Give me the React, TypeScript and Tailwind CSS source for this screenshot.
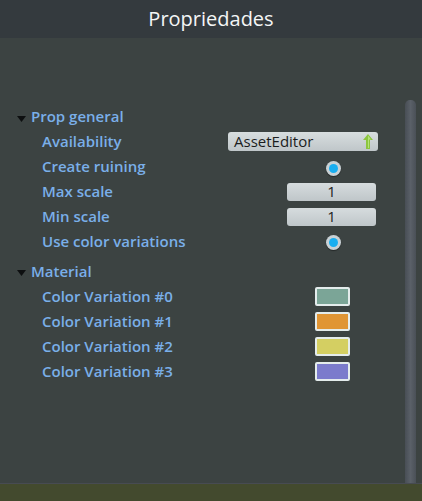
import React from 'react';

const label = 'text-[15px] font-semibold text-[#7aafe9] leading-none';

function Caret() {
  return (
    <svg width="9" height="6" viewBox="0 0 9 6" className="mt-[4px] shrink-0">
      <path d="M0 0 H9 L4.5 6 Z" fill="#0d0f10" />
    </svg>
  );
}

function Radio() {
  return (
    <div className="w-[15px] h-[15px] rounded-full bg-[#c9d1d5] flex items-center justify-center shadow-[0_1px_1px_rgba(0,0,0,0.4)]">
      <div className="w-[9px] h-[9px] rounded-full bg-[#19aef0]" />
    </div>
  );
}

function NumberBox({ value }: { value: string }) {
  return (
    <div className="w-[89px] h-[18px] rounded-[3px] bg-gradient-to-b from-[#d6dcde] to-[#bfc6c9] flex items-center justify-center text-[15px] text-[#1b1d1e] leading-none">
      {value}
    </div>
  );
}

function Swatch({ color }: { color: string }) {
  return (
    <div className="w-[35px] h-[19px] rounded-[2px] border-[2px] border-[#e4ecec]" style={{ background: color }} />
  );
}

function Row({ text, children }: { text: string; children?: React.ReactNode }) {
  return (
    <div className="h-[25px] flex items-center">
      <div className={`w-[228px] pl-[42px] ${label}`}>{text}</div>
      <div className="w-[150px] flex justify-end items-center">{children}</div>
    </div>
  );
}

function Group({ title, className = '' }: { title: string; className?: string }) {
  return (
    <div className={`flex items-center pl-[17px] gap-[5px] ${className}`}>
      <Caret />
      <span className={label}>{title}</span>
    </div>
  );
}

export default function App() {
  return (
    <div className="w-[422px] h-[501px] flex flex-col bg-[#3c4342]" style={{ fontFamily: '"Open Sans", "Noto Sans", sans-serif' }}>
      <div className="h-[38px] bg-[#343a3e] flex items-center justify-center text-[20px] text-[#f4f6f6] shrink-0">
        Propriedades
      </div>
      <div className="flex-1 flex border-b border-[#474b52]">
        <div className="flex-1 pt-[66px]">
          <Group title="Prop general" className="h-[25px]" />
          <Row text="Availability">
            <div className="w-[150px] h-[19px] rounded-[3px] bg-gradient-to-b from-[#d8dedf] to-[#bfc6c9] flex items-center pl-[6px] pr-[5px] text-[15px] text-[#1b1d1e] leading-none">
              <span className="flex-1">AssetEditor</span>
              <svg width="10" height="15" viewBox="0 0 10 15">
                <path d="M5 0 L10 6 H7 V15 H3 V6 H0 Z" fill="#8cc63f" />
                <path d="M5 1.5 L8 5.5 H6 V14 H5 Z" fill="#b5e27a" />
              </svg>
            </div>
          </Row>
          <Row text="Create ruining">
            <div className="mr-[37px] mt-[4px]"><Radio /></div>
          </Row>
          <Row text="Max scale">
            <div className="mr-[2px]"><NumberBox value="1" /></div>
          </Row>
          <Row text="Min scale">
            <div className="mr-[2px]"><NumberBox value="1" /></div>
          </Row>
          <Row text="Use color variations">
            <div className="mr-[37px] mt-[2px]"><Radio /></div>
          </Row>
          <Group title="Material" className="h-[26px] mt-[4px]" />
          <Row text="Color Variation #0">
            <div className="mr-[28px]"><Swatch color="#7ba597" /></div>
          </Row>
          <Row text="Color Variation #1">
            <div className="mr-[28px]"><Swatch color="#e09534" /></div>
          </Row>
          <Row text="Color Variation #2">
            <div className="mr-[28px]"><Swatch color="#d4cf62" /></div>
          </Row>
          <Row text="Color Variation #3">
            <div className="mr-[28px]"><Swatch color="#7b7bcc" /></div>
          </Row>
        </div>
        <div className="w-[11px] mr-[6px] mt-[62px] rounded-t-[5px] bg-gradient-to-r from-[#484e55] via-[#5a6068] to-[#4a5057]" />
      </div>
      <div className="h-[17px] shrink-0 bg-[#434a2e]" />
    </div>
  );
}
